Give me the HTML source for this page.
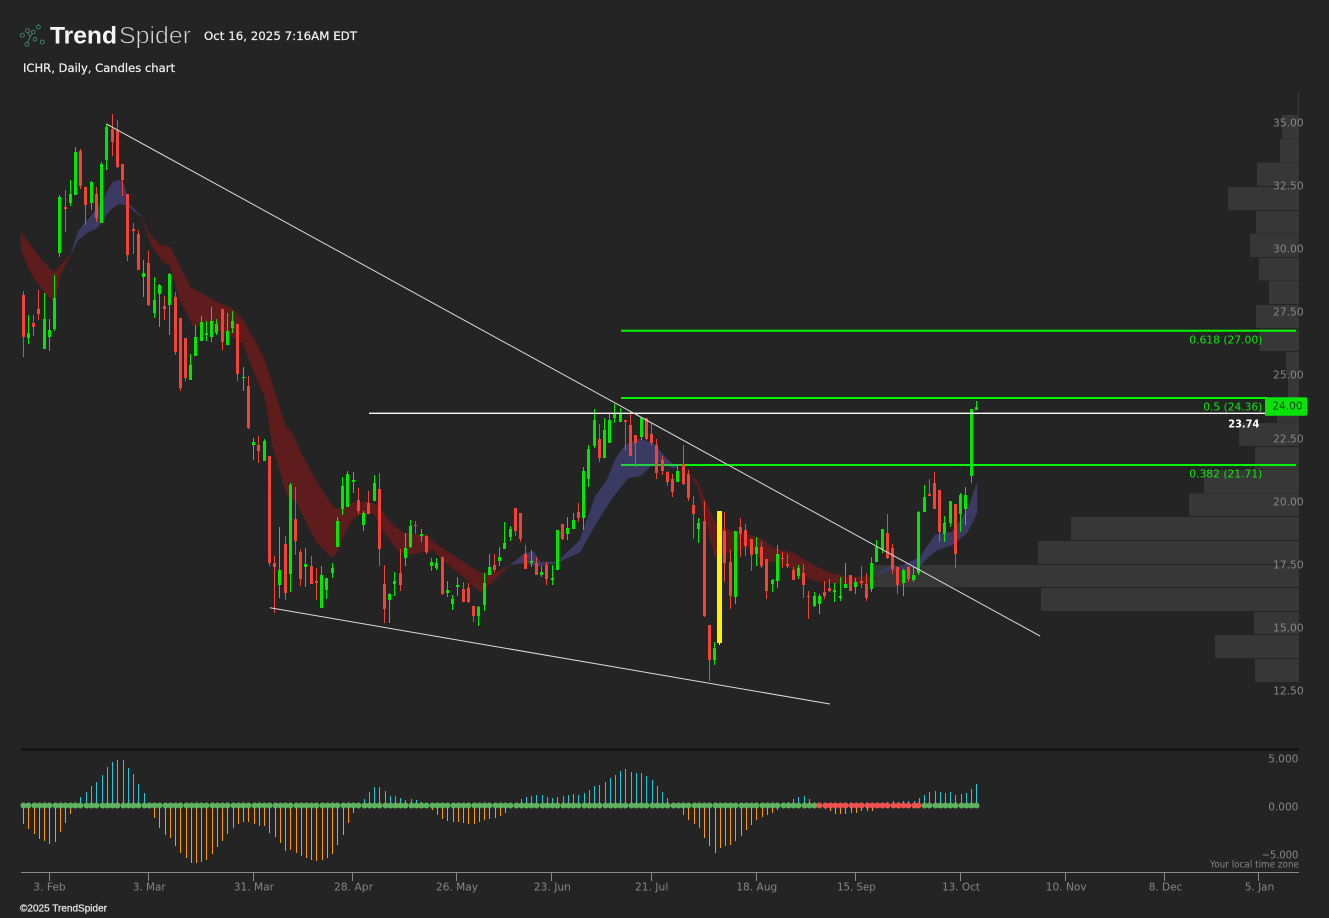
<!DOCTYPE html>
<html lang="en"><head><meta charset="utf-8"><title>ICHR chart</title>
<style>
html,body{margin:0;padding:0;background:#242424;width:1329px;height:918px;overflow:hidden}
svg{display:block}
text{font-family:"DejaVu Sans","Liberation Sans",sans-serif;font-size:11px}
.ax{fill:#868686;dominant-baseline:central}
.fib{fill:#0be80b;dominant-baseline:central}
.wh{fill:#f2f2f2;stroke:#f2f2f2;stroke-width:.2;dominant-baseline:central}
</style></head><body>
<svg width="1329" height="918" viewBox="0 0 1329 918" xmlns="http://www.w3.org/2000/svg">
<rect width="1329" height="918" fill="#242424"/>

<!-- logo -->
<g fill="none" stroke="#3f8a74" stroke-width=".9">
<circle cx="22.3" cy="35.3" r="2"/><circle cx="27" cy="44.3" r="2"/><circle cx="27.7" cy="30.7" r="2"/><circle cx="33.3" cy="32" r="1.8"/><circle cx="38.3" cy="27" r="2"/><circle cx="35" cy="39.3" r="1.8"/><circle cx="42.3" cy="42" r="2"/>
<path d="M28.3 32.700L30 37M27.500 42.400L30 37M30 37L32.300 33.700"/>
</g>
<text x="50" y="43.5" textLength="67" lengthAdjust="spacingAndGlyphs" style="font-family:'Liberation Sans',sans-serif;font-weight:700;font-size:24px" fill="#f6f6f6">Trend</text>
<text x="119" y="43.5" textLength="72" lengthAdjust="spacingAndGlyphs" style="font-family:'Liberation Sans',sans-serif;font-size:24.5px;stroke:#242424;stroke-width:.7" fill="#d4d4d4">Spider</text>
<text class="wh" x="204" y="36" textLength="153" lengthAdjust="spacingAndGlyphs" style="font-size:11.5px">Oct 16, 2025 7:16AM EDT</text>
<text class="wh" x="23" y="68" textLength="152" lengthAdjust="spacingAndGlyphs" style="font-size:11.5px">ICHR, Daily, Candles chart</text>

<!-- volume profile -->
<path stroke="#3a3a3a" d="M1298.5 92V115"/>
<g fill="#373737">
<rect x="1282" y="115" width="17" height="23.5"/><rect x="1280" y="139" width="19" height="23"/><rect x="1257" y="162.500" width="42" height="23.500"/><rect x="1228" y="187" width="71" height="23"/><rect x="1256" y="211" width="43" height="22.500"/><rect x="1250" y="234" width="49" height="23"/><rect x="1259" y="258" width="40" height="22.500"/><rect x="1269" y="281" width="30" height="23"/><rect x="1256" y="305" width="43" height="23"/><rect x="1260" y="329" width="39" height="22"/><rect x="1286" y="352" width="13" height="23"/><rect x="1288" y="375.500" width="11" height="23"/><rect x="1277" y="399" width="22" height="23.500"/><rect x="1239" y="423" width="60" height="23"/><rect x="1255" y="447" width="44" height="22.500"/><rect x="1204" y="470" width="95" height="23"/><rect x="1189" y="493.500" width="110" height="22.500"/><rect x="1071" y="517" width="228" height="23"/><rect x="1038" y="541" width="261" height="23"/><rect x="873" y="565" width="426" height="22"/><rect x="1041" y="588" width="258" height="23"/><rect x="1254" y="612" width="45" height="22"/><rect x="1215" y="635" width="84" height="23"/><rect x="1255" y="659" width="44" height="23"/>
</g>

<!-- fib lines -->
<g stroke="#00f500" stroke-width="2" fill="none">
<path d="M621 330.700H1296M621 398H1267M621 465H1296"/>
</g>

<!-- ribbons -->
<g fill="#5e1d1c" stroke="#5e1d1c" stroke-width=".5" stroke-linejoin="round">
<path d="M21 232L30 245L40 258L50 269L54 272L60 266L71 254L60 275L56 298L52 300L45 293L35 280L27 265L21 250Z"/>
<path d="M142 217L150 235L160 245L170 247L180 267L190 287L200 293L217 302L233 309L243 320L264 358L285 425L292 433L302 455L317 483L333 507L342 510L350 503L367 502L377 505L393 525L403 533L427 536L440 547L457 558L480 573L497 572L510 565L500 575L487 587L480 592L467 580L443 560L433 550L407 555L397 550L383 530L373 513L360 515L353 518L345 532L337 552L332 557L317 543L297 503L287 495L273 447L265 397L257 380L243 343L227 333L193 325L180 300L170 265L163 262L152 247Z"/>
<path d="M677 467L688 473L698 482L707 505L715 522L723 528L737 532L760 538L773 548L793 553L813 565L830 573L847 577L877 577L867 585L827 583L813 580L780 563L763 560L747 547L715 557L705 517L698 487L690 475Z"/>
</g>
<g fill="#3a3a63" stroke="#3a3a63" stroke-width=".5" stroke-linejoin="round">
<path d="M71 254L78 232L83 225L92 215L103 200L108 190L113 182L120 180L124 185L130 205L142 217L135 212L127 205L118 204L110 210L103 220L97 228L88 232L78 240Z"/>
<path d="M510 565L525 553L534 552L540 562L557 562L580 540L595 497L607 480L615 460L625 445L640 439L653 443L668 460L677 467L673 468L657 461L640 476L628 478L613 497L598 520L580 552L557 563L540 566L523 563Z"/>
<path d="M877 577L880 572L887 567L900 567L920 557L935 535L952 532L963 517L970 503L977 483V513L967 533L952 545L937 550L925 560L920 567L900 570L880 573Z"/>
</g>
<path d="M621 465H680" stroke="#22d044" stroke-width="2"/>

<!-- candle wicks green -->
<path fill="none" stroke="#00e800" stroke-width="1" d="M28.500 315V344M44.500 293V349M49.500 319V351M54.500 275V331M59.500 195V257M70.500 180V206M75.500 147V195M91.500 181V210M101.500 162V223M106.500 124V170M143.500 260V297M154.500 277V318M159.500 284V327M169.500 273V335M190.500 354V380M195.500 325V356M201.500 316V341M206.500 321V341M211.500 307V342M216.500 319V335M227.500 313V345M232.500 311V333M243.500 367V391M253.500 438V460M264.500 439V461M279.500 527V598M290.500 483V592M305.500 548V587M321.500 566V608M326.500 578V599M332.500 563V578M337.500 517V547M342.500 477V515M347.500 471V507M353.500 472V493M363.500 511V531M374.500 475V501M389.500 593V623M394.500 572V596M405.500 533V566M410.500 520V548M421.500 529V542M431.500 558V571M436.500 558V570M447.500 581V597M452.500 595V610M457.500 577V596M478.500 606V626M484.500 573V611M489.500 554V575M499.500 547V566M504.500 522V549M510.500 526V541M531.500 550V567M541.500 566V577M552.500 565V585M557.500 530V570M567.500 517V540M573.500 513V529M583.500 467V530M588.500 445V487M594.500 409V448M604.500 418V458M609.500 414V443M614.500 404V423M620.500 408V422M641.500 417V440M677.500 465V482M698.500 518V543M714.500 642V665M735.500 531V604M756.500 537V566M772.500 579V592M777.500 545V588M798.500 565V579M814.500 592V607M819.500 594V614M834.500 583V602M840.500 577V601M845.500 563V588M855.500 578V594M871.500 557V592M876.500 540V562M882.500 529V553M903.500 569V596M913.500 567V582M918.500 511V575M924.500 485V512M944.500 516V542M950.500 501V527M960.500 493V532M965.500 487V525M971.500 409V483M976.500 401V410"/>
<!-- candle bodies green -->
<path fill="none" stroke="#00e800" stroke-width="3" d="M28.500 333V338M44.500 319V349M49.500 330V337M54.500 298V329M59.500 197V253M70.500 194V203M75.500 152V195M91.500 182V203M101.500 164V223M106.500 127V160M143.500 273V277M154.500 300V313M159.500 285V294M169.500 274V305M190.500 365V380M195.500 337V356M201.500 322V341M206.500 333V335M211.500 321V337M216.500 324V333M227.500 331V345M232.500 321V328M243.500 377V378M253.500 442V445M264.500 441V461M279.500 570V585M290.500 485V574M305.500 564V567M321.500 575V608M326.500 578V590M332.500 568V573M337.500 521V547M342.500 486V509M347.500 474V507M353.500 480V482M363.500 513V525M374.500 483V501M389.500 594V600M394.500 581V584M405.500 548V558M410.500 526V547M421.500 534V536M431.500 562V566M436.500 563V568M447.500 590V593M452.500 599V604M457.500 585V587M478.500 607V616M484.500 583V605M489.500 567V575M499.500 557V561M504.500 543V549M510.500 529V537M531.500 561V563M541.500 572V575M552.500 578V580M557.500 530V570M567.500 528V534M573.500 520V529M583.500 471V518M588.500 449V479M594.500 420V446M604.500 430V458M609.500 420V443M614.500 414V418M620.500 414V422M641.500 418V437M677.500 471V482M698.500 523V529M714.500 648V660M735.500 531V597M756.500 547V554M772.500 580V584M777.500 554V581M798.500 568V576M814.500 596V606M819.500 596V604M834.500 590V592M840.500 596V598M845.500 584V588M855.500 582V587M871.500 563V589M876.500 547V562M882.500 529V550M903.500 570V583M913.500 575V580M918.500 512V573M924.500 497V512M944.500 523V534M950.500 501V523M960.500 495V514M965.500 495V509M971.500 409V476M976.500 407V410"/>
<!-- candle wicks red -->
<path fill="none" stroke="#f44336" stroke-width="1" d="M23.500 291V357M33.500 315V336M38.500 290V320M65.500 190V232M80.500 149V189M85.500 187V225M96.500 187V222M112.500 114V156M117.500 120V168M122.500 164V196M127.500 194V261M133.500 223V254M138.500 230V270M148.500 251V306M164.500 296V320M175.500 292V355M180.500 318V391M185.500 338V381M222.500 309V350M237.500 324V381M248.500 376V429M258.500 436V463M269.500 456V566M274.500 556V613M285.500 536V600M295.500 487V555M300.500 549V586M311.500 556V584M316.500 568V600M358.500 488V514M368.500 491V514M379.500 473V566M384.500 565V623M400.500 549V591M415.500 521V534M426.500 535V554M442.500 557V595M463.500 582V602M468.500 583V603M473.500 606V622M494.500 554V572M515.500 508V536M520.500 513V542M525.500 545V569M536.500 557V575M546.500 562V585M562.500 524V540M578.500 503V522M599.500 424V462M625.500 420V450M630.500 412V456M635.500 435V467M646.500 418V440M651.500 423V445M656.500 439V479M662.500 456V475M667.500 471V486M672.500 474V497M683.500 445V485M688.500 470V501M693.500 496V539M704.500 501V617M709.500 625V681M724.500 512V582M730.500 550V609M740.500 518V557M745.500 524V556M751.500 539V571M761.500 542V568M766.500 559V599M782.500 552V568M787.500 554V568M793.500 567V580M803.500 564V598M808.500 591V619M824.500 581V599M829.500 579V592M850.500 575V591M861.500 566V588M866.500 573V601M887.500 514V559M892.500 544V574M897.500 567V594M908.500 566V582M929.500 479V496M934.500 472V509M939.500 490V542M955.500 504V568"/>
<!-- candle bodies red -->
<path fill="none" stroke="#f44336" stroke-width="3" d="M23.500 295V337M33.500 323V327M38.500 309V314M65.500 207V209M80.500 151V186M85.500 187V205M96.500 194V218M112.500 129V142M117.500 130V167M122.500 164V180M127.500 194V255M133.500 229V231M138.500 234V270M148.500 263V305M164.500 306V309M175.500 297V352M180.500 318V388M185.500 338V378M222.500 309V342M237.500 324V374M248.500 386V428M258.500 445V451M269.500 456V563M274.500 563V567M285.500 544V593M295.500 519V541M300.500 552V579M311.500 566V584M316.500 581V583M358.500 500V511M368.500 503V514M379.500 489V549M384.500 584V609M400.500 573V585M415.500 525V526M426.500 536V552M442.500 557V594M463.500 589V602M468.500 588V602M473.500 606V616M494.500 565V570M515.500 508V531M520.500 513V539M525.500 554V569M536.500 563V575M546.500 565V579M562.500 524V539M578.500 512V518M599.500 439V458M625.500 420V422M630.500 425V456M635.500 435V443M646.500 418V439M651.500 434V443M656.500 445V473M662.500 460V471M667.500 472V482M672.500 479V492M683.500 464V484M688.500 474V498M693.500 505V514M704.500 521V616M709.500 625V660M724.500 531V563M730.500 562V596M740.500 527V534M745.500 530V546M751.500 539V555M761.500 547V566M766.500 559V591M782.500 558V559M787.500 564V566M793.500 570V580M803.500 573V585M808.500 596V597M824.500 592V596M829.500 588V591M850.500 575V591M861.500 581V583M866.500 584V598M887.500 533V558M892.500 548V569M897.500 567V585M908.500 567V579M929.500 494V496M934.500 483V509M939.500 490V532M955.500 504V554"/>
<!-- yellow candle -->
<rect x="717" y="511" width="5" height="132" fill="#fff200"/><path d="M719.500 643V645" stroke="#fff200"/>

<!-- white lines -->
<path d="M369 413.300H1265" stroke="#ffffff" stroke-width="1.300" fill="none"/>
<path d="M106.500 124L1040 636M270 607.800L830 704" stroke="#dcdcdc" stroke-width="1" fill="none"/>

<!-- labels on chart -->
<text class="fib" x="1189.300" y="340" textLength="73" lengthAdjust="spacingAndGlyphs">0.618 (27.00)</text>
<text class="fib" x="1203.300" y="407" textLength="59" lengthAdjust="spacingAndGlyphs">0.5 (24.36)</text>
<text class="fib" x="1189.300" y="474" textLength="73" lengthAdjust="spacingAndGlyphs">0.382 (21.71)</text>
<text x="1228.300" y="424" textLength="31" lengthAdjust="spacingAndGlyphs" fill="#ffffff" style="font-weight:700;dominant-baseline:central">23.74</text>

<!-- price axis -->
<g class="ax">
<text class="ax" x="1273" y="123" textLength="30.700" lengthAdjust="spacingAndGlyphs">35.00</text>
<text class="ax" x="1273" y="186" textLength="30.700" lengthAdjust="spacingAndGlyphs">32.50</text>
<text class="ax" x="1273" y="249" textLength="30.700" lengthAdjust="spacingAndGlyphs">30.00</text>
<text class="ax" x="1273" y="312" textLength="30.700" lengthAdjust="spacingAndGlyphs">27.50</text>
<text class="ax" x="1273" y="375" textLength="30.700" lengthAdjust="spacingAndGlyphs">25.00</text>
<text class="ax" x="1273" y="439" textLength="30.700" lengthAdjust="spacingAndGlyphs">22.50</text>
<text class="ax" x="1273" y="502" textLength="30.700" lengthAdjust="spacingAndGlyphs">20.00</text>
<text class="ax" x="1273" y="565" textLength="30.700" lengthAdjust="spacingAndGlyphs">17.50</text>
<text class="ax" x="1273" y="628" textLength="30.700" lengthAdjust="spacingAndGlyphs">15.00</text>
<text class="ax" x="1273" y="691" textLength="30.700" lengthAdjust="spacingAndGlyphs">12.50</text>
</g>
<!-- badge -->
<path d="M1265 397.300H1305.300a2 2 0 0 1 2 2V413.700a2 2 0 0 1 -2 2H1265Z" fill="#09e309"/>
<text x="1272.300" y="406" textLength="30.400" lengthAdjust="spacingAndGlyphs" fill="#0d3a0d" style="dominant-baseline:central">24.00</text>

<!-- separator -->
<rect x="21" y="748" width="1278" height="3" fill="#161616"/>

<!-- oscillator bars -->
<path fill="none" stroke="#ff9800" stroke-width="1" d="M23.500 805V824M28.500 805V829M34.500 805V834M39.500 805V839M44.500 805V841M49.500 805V844M55.500 805V842M60.500 805V832M65.500 805V823M70.500 805V814M154.500 805V818M159.500 805V828M165.500 805V835M170.500 805V838M175.500 805V846M180.500 805V853M186.500 805V858M191.500 805V863M196.500 805V863M201.500 805V862M206.500 805V860M212.500 805V854M217.500 805V847M222.500 805V841M227.500 805V834M233.500 805V828M238.500 805V824M243.500 805V822M248.500 805V822M254.500 805V824M259.500 805V826M264.500 805V826M269.500 805V833M275.500 805V837M280.500 805V843M285.500 805V851M290.500 805V850M296.500 805V853M301.500 805V856M306.500 805V858M311.500 805V860M316.500 805V861M322.500 805V860M327.500 805V858M332.500 805V854M337.500 805V845M343.500 805V835M348.500 805V823M353.500 805V813M432.500 805V810M437.500 805V815M442.500 805V819M447.500 805V821M453.500 805V822M458.500 805V822M463.500 805V823M468.500 805V824M474.500 805V824M479.500 805V822M484.500 805V820M489.500 805V819M495.500 805V818M500.500 805V816M505.500 805V813M683.500 805V815M688.500 805V820M694.500 805V824M699.500 805V828M704.500 805V838M709.500 805V846M715.500 805V853M720.500 805V848M725.500 805V846M730.500 805V845M735.500 805V841M741.500 805V836M746.500 805V830M751.500 805V825M756.500 805V820M762.500 805V817M767.500 805V815M772.500 805V813M777.500 805V810M825.500 805V809M830.500 805V811M835.500 805V814M840.500 805V814M845.500 805V814M851.500 805V813M856.500 805V813M861.500 805V811M867.500 805V811M872.500 805V811"/>
<path fill="none" stroke="#26c6da" stroke-width="1" d="M80.500 805V797M86.500 805V792M91.500 805V786M96.500 805V782M102.500 805V775M107.500 805V767M112.500 805V762M117.500 805V760M123.500 805V760M128.500 805V768M133.500 805V774M138.500 805V784M144.500 805V793M364.500 805V799M369.500 805V792M374.500 805V787M379.500 805V787M385.500 805V791M390.500 805V796M395.500 805V796M400.500 805V798M405.500 805V800M411.500 805V799M416.500 805V800M421.500 805V802M521.500 805V799M526.500 805V797M531.500 805V796M536.500 805V795M542.500 805V795M547.500 805V797M552.500 805V798M557.500 805V797M563.500 805V796M568.500 805V795M573.500 805V794M578.500 805V795M584.500 805V793M589.500 805V790M594.500 805V786M599.500 805V785M605.500 805V782M610.500 805V778M615.500 805V775M620.500 805V771M625.500 805V769M631.500 805V772M636.500 805V773M641.500 805V773M646.500 805V776M652.500 805V780M657.500 805V786M662.500 805V792M667.500 805V798M788.500 805V802M793.500 805V799M798.500 805V797M804.500 805V796M809.500 805V799M887.500 805V802M893.500 805V801M898.500 805V802M903.500 805V801M908.500 805V801M914.500 805V801M919.500 805V798M924.500 805V795M929.500 805V792M935.500 805V791M940.500 805V792M945.500 805V793M950.500 805V792M955.500 805V795M961.500 805V794M966.500 805V793M971.500 805V789M976.500 805V784"/>
<!-- dots green -->
<path fill="none" stroke="#5fb25f" stroke-width="6" stroke-linecap="round" d="M23.500 805.500h0M28.500 805.500h0M34.500 805.500h0M39.500 805.500h0M44.500 805.500h0M49.500 805.500h0M55.500 805.500h0M60.500 805.500h0M65.500 805.500h0M70.500 805.500h0M75.500 805.500h0M80.500 805.500h0M86.500 805.500h0M91.500 805.500h0M96.500 805.500h0M102.500 805.500h0M107.500 805.500h0M112.500 805.500h0M117.500 805.500h0M123.500 805.500h0M128.500 805.500h0M133.500 805.500h0M138.500 805.500h0M144.500 805.500h0M149.500 805.500h0M154.500 805.500h0M159.500 805.500h0M165.500 805.500h0M170.500 805.500h0M175.500 805.500h0M180.500 805.500h0M186.500 805.500h0M191.500 805.500h0M196.500 805.500h0M201.500 805.500h0M206.500 805.500h0M212.500 805.500h0M217.500 805.500h0M222.500 805.500h0M227.500 805.500h0M233.500 805.500h0M238.500 805.500h0M243.500 805.500h0M248.500 805.500h0M254.500 805.500h0M259.500 805.500h0M264.500 805.500h0M269.500 805.500h0M275.500 805.500h0M280.500 805.500h0M285.500 805.500h0M290.500 805.500h0M296.500 805.500h0M301.500 805.500h0M306.500 805.500h0M311.500 805.500h0M316.500 805.500h0M322.500 805.500h0M327.500 805.500h0M332.500 805.500h0M337.500 805.500h0M343.500 805.500h0M348.500 805.500h0M353.500 805.500h0M358.500 805.500h0M364.500 805.500h0M369.500 805.500h0M374.500 805.500h0M379.500 805.500h0M385.500 805.500h0M390.500 805.500h0M395.500 805.500h0M400.500 805.500h0M405.500 805.500h0M411.500 805.500h0M416.500 805.500h0M421.500 805.500h0M426.500 805.500h0M432.500 805.500h0M437.500 805.500h0M442.500 805.500h0M447.500 805.500h0M453.500 805.500h0M458.500 805.500h0M463.500 805.500h0M468.500 805.500h0M474.500 805.500h0M479.500 805.500h0M484.500 805.500h0M489.500 805.500h0M495.500 805.500h0M500.500 805.500h0M505.500 805.500h0M510.500 805.500h0M516.500 805.500h0M521.500 805.500h0M526.500 805.500h0M531.500 805.500h0M536.500 805.500h0M542.500 805.500h0M547.500 805.500h0M552.500 805.500h0M557.500 805.500h0M563.500 805.500h0M568.500 805.500h0M573.500 805.500h0M578.500 805.500h0M584.500 805.500h0M589.500 805.500h0M594.500 805.500h0M599.500 805.500h0M605.500 805.500h0M610.500 805.500h0M615.500 805.500h0M620.500 805.500h0M625.500 805.500h0M631.500 805.500h0M636.500 805.500h0M641.500 805.500h0M646.500 805.500h0M652.500 805.500h0M657.500 805.500h0M662.500 805.500h0M667.500 805.500h0M673.500 805.500h0M678.500 805.500h0M683.500 805.500h0M688.500 805.500h0M694.500 805.500h0M699.500 805.500h0M704.500 805.500h0M709.500 805.500h0M715.500 805.500h0M720.500 805.500h0M725.500 805.500h0M730.500 805.500h0M735.500 805.500h0M741.500 805.500h0M746.500 805.500h0M751.500 805.500h0M756.500 805.500h0M762.500 805.500h0M767.500 805.500h0M772.500 805.500h0M777.500 805.500h0M783.500 805.500h0M788.500 805.500h0M793.500 805.500h0M798.500 805.500h0M804.500 805.500h0M809.500 805.500h0M814.500 805.500h0M924.500 805.500h0M929.500 805.500h0M935.500 805.500h0M940.500 805.500h0M945.500 805.500h0M950.500 805.500h0M955.500 805.500h0M961.500 805.500h0M966.500 805.500h0M971.500 805.500h0M976.500 805.500h0"/>
<!-- dots red -->
<path fill="none" stroke="#ef5350" stroke-width="6" stroke-linecap="round" d="M819.500 805.500h0M825.500 805.500h0M830.500 805.500h0M835.500 805.500h0M840.500 805.500h0M845.500 805.500h0M851.500 805.500h0M856.500 805.500h0M861.500 805.500h0M867.500 805.500h0M872.500 805.500h0M877.500 805.500h0M882.500 805.500h0M887.500 805.500h0M893.500 805.500h0M898.500 805.500h0M903.500 805.500h0M908.500 805.500h0M914.500 805.500h0M918.500 805.500h0"/>

<text class="ax" x="1268.300" y="759" textLength="30" lengthAdjust="spacingAndGlyphs">5.000</text>
<text class="ax" x="1268.300" y="807" textLength="30" lengthAdjust="spacingAndGlyphs">0.000</text>
<text class="ax" x="1261.700" y="855" textLength="36.600" lengthAdjust="spacingAndGlyphs">−5.000</text>
<text class="ax" x="1210" y="865" textLength="89" lengthAdjust="spacingAndGlyphs" style="font-size:10px">Your local time zone</text>

<!-- time axis -->
<path fill="none" stroke="#8a8a8a" stroke-width="1" d="M21 872.500H1299M49.500 872V881M148.500 872V881M253.500 872V881M352.500 872V881M456.500 872V881M551.500 872V881M651.500 872V881M756.500 872V881M855.500 872V881M960.500 872V881M1065.500 872V881M1164.500 872V881M1258.500 872V881"/>
<text class="ax" x="33.300" y="887" textLength="32.400" lengthAdjust="spacingAndGlyphs">3. Feb</text>
<text class="ax" x="132.700" y="887" textLength="33" lengthAdjust="spacingAndGlyphs">3. Mar</text>
<text class="ax" x="233.700" y="887" textLength="40.300" lengthAdjust="spacingAndGlyphs">31. Mar</text>
<text class="ax" x="334" y="887" textLength="39" lengthAdjust="spacingAndGlyphs">28. Apr</text>
<text class="ax" x="436" y="887" textLength="42" lengthAdjust="spacingAndGlyphs">26. May</text>
<text class="ax" x="533.700" y="887" textLength="37.300" lengthAdjust="spacingAndGlyphs">23. Jun</text>
<text class="ax" x="635" y="887" textLength="33.300" lengthAdjust="spacingAndGlyphs">21. Jul</text>
<text class="ax" x="736.300" y="887" textLength="41" lengthAdjust="spacingAndGlyphs">18. Aug</text>
<text class="ax" x="837" y="887" textLength="38.700" lengthAdjust="spacingAndGlyphs">15. Sep</text>
<text class="ax" x="942" y="887" textLength="38" lengthAdjust="spacingAndGlyphs">13. Oct</text>
<text class="ax" x="1045.700" y="887" textLength="41" lengthAdjust="spacingAndGlyphs">10. Nov</text>
<text class="ax" x="1148.700" y="887" textLength="33.600" lengthAdjust="spacingAndGlyphs">8. Dec</text>
<text class="ax" x="1244.700" y="887" textLength="29.600" lengthAdjust="spacingAndGlyphs">5. Jan</text>

<text x="20" y="908.300" textLength="87" lengthAdjust="spacingAndGlyphs" fill="#e8e8e8" style="font-family:'Liberation Sans',sans-serif;font-size:10.500px;dominant-baseline:central;stroke:#e8e8e8;stroke-width:.25">©2025 TrendSpider</text>
</svg>
</body></html>
